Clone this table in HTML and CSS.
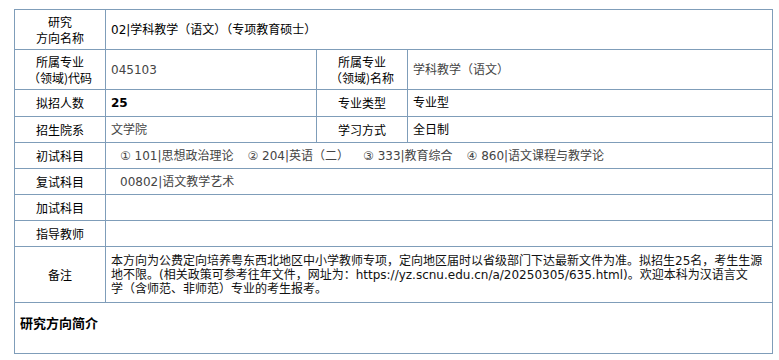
FILE: index.html
```html
<!DOCTYPE html>
<html lang="zh-CN">
<head>
<meta charset="utf-8">
<title>研究方向</title>
<link rel="stylesheet" href="styles.css">
</head>
<body>
<div class="wrap">
<table class="info">
  <colgroup>
    <col class="c1">
    <col class="c2">
    <col class="c3">
    <col class="c4">
  </colgroup>
  <tr class="h40">
    <th>研究<br>方向名称</th>
    <td colspan="3" class="dark">02|学科教学（语文）（专项教育硕士）</td>
  </tr>
  <tr class="h40">
    <th>所属专业<br>（领域)代码</th>
    <td>045103</td>
    <th>所属专业<br>（领域)名称</th>
    <td>学科教学（语文）</td>
  </tr>
  <tr class="h27">
    <th>拟招人数</th>
    <td class="dark bold">25</td>
    <th>专业类型</th>
    <td class="dark">专业型</td>
  </tr>
  <tr class="h26">
    <th>招生院系</th>
    <td>文学院</td>
    <th>学习方式</th>
    <td class="dark">全日制</td>
  </tr>
  <tr class="h26">
    <th>初试科目</th>
    <td colspan="3" class="indent">
      <span class="subj">① 101|思想政治理论</span><span class="subj">② 204|英语（二）</span><span class="subj">③ 333|教育综合</span><span class="subj">④ 860|语文课程与教学论</span>
    </td>
  </tr>
  <tr class="h26">
    <th>复试科目</th>
    <td colspan="3" class="indent">00802|语文教学艺术</td>
  </tr>
  <tr class="h26">
    <th>加试科目</th>
    <td colspan="3"></td>
  </tr>
  <tr class="h26">
    <th>指导教师</th>
    <td colspan="3"></td>
  </tr>
  <tr class="h56">
    <th>备注</th>
    <td colspan="3" class="note dark">本方向为公费定向培养粤东西北地区中小学教师专项，定向地区届时以省级部门下达最新文件为准。拟招生25名，考生生源<br>地不限。(相关政策可参考往年文件，网址为：https://yz.scnu.edu.cn/a/20250305/635.html)。欢迎本科为汉语言文<br>学（含师范、非师范）专业的考生报考。</td>
  </tr>
  <tr class="h51">
    <td colspan="4" class="intro">研究方向简介</td>
  </tr>
</table>
</div>
</body>
</html>
```

FILE: styles.css
```css
html, body {
  margin: 0;
  padding: 0;
  background: #ffffff;
}

body {
  font-family: "DejaVu Sans", "Noto Sans CJK SC", sans-serif;
  font-size: 12px;
  color: #000;
}

.wrap {
  padding: 9px 0 0 14px;
}

.info {
  border-collapse: collapse;
  table-layout: fixed;
  width: 758px;
}

.c1 { width: 91px; }
.c2 { width: 211px; }
.c3 { width: 91px; }
.c4 { width: 365px; }

.info th,
.info td {
  border: 1px solid #7f9db9;
  padding: 0 4px 0 5px;
  line-height: 16px;
  vertical-align: middle;
}

.info th {
  font-family: "Noto Sans CJK SC", sans-serif;
  font-weight: normal;
  text-align: center;
  color: #000;
  padding: 0;
}

.info td {
  font-family: "DejaVu Sans", "Noto Sans CJK SC", sans-serif;
  text-align: left;
  color: #444;
}

.info td.dark { color: #000; }
.info td.bold { font-weight: bold; }

.info td.indent { padding-left: 14px; }

.subj { margin-right: 14px; }

.h40 { height: 40px; }
.h27 { height: 27px; }
.h26 { height: 26px; }
.h56 { height: 56px; }
.h51 { height: 51px; }

.info td.note {
  line-height: 14px;
  color: #111;
  white-space: nowrap;
}

.info td.intro {
  font-family: "Noto Sans CJK SC", sans-serif;
  vertical-align: top;
  padding-top: 12px;
  font-weight: bold;
  font-size: 13px;
  color: #000;
}
```
